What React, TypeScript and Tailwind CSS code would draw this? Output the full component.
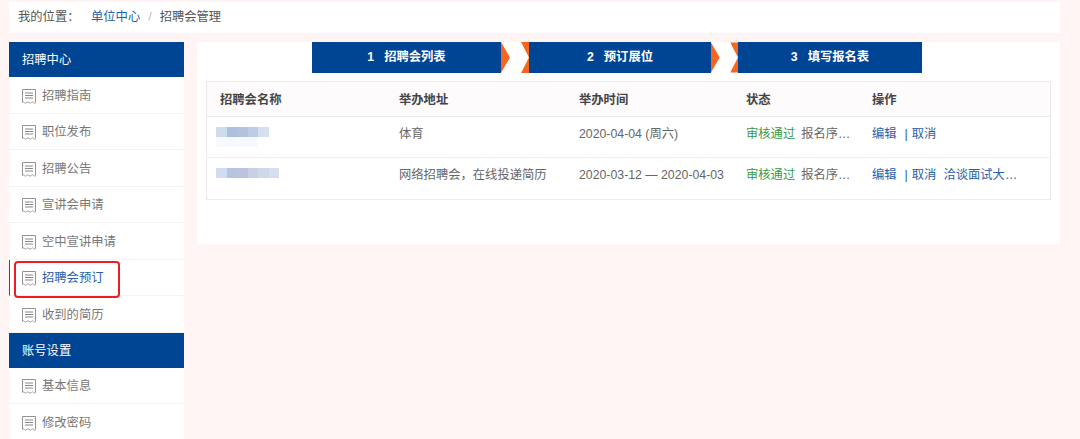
const font = "font-['Liberation_Sans','Noto_Sans_CJK_SC',sans-serif]";

const ReceiptIcon = () => (
  <svg width="16" height="16" viewBox="0 0 16 16" fill="none" stroke="#939393" className="shrink-0">
    <path d="M1.5 14V1.5H14.5V14" />
    <path d="M1 14.5q1.2 -1.4 2.3 0t2.3 0t2.4 0t2.3 0t2.3 0t2.4 0" strokeWidth="0.9" />
    <path d="M4 5H12M4 7.5H12M4 10H12" strokeWidth="1.2" stroke="#888" />
  </svg>
);

const SideHeader = ({ title }: { title: string }) => (
  <div className="h-[35px] bg-[#004494] pl-[13px] pt-[1px] text-white leading-[35px]">{title}</div>
);

const SideItem = ({ title, active }: { title: string; active?: boolean }) => (
  <div
    className={`flex h-[36.5px] items-center gap-[5px] border-b border-[#f5f2f2] bg-white pt-[2px] ${
      active ? "relative border-l border-l-[#33507f] pl-[11px] text-[#2a5ea8]" : "pl-[12px] text-[#777]"
    }`}
  >
    <ReceiptIcon />
    <span>{title}</span>
    {active && (
      <div className="absolute left-[4px] top-[1px] h-[37px] w-[106px] rounded-[4px] border-[2.5px] border-[#ee1c25]" />
    )}
  </div>
);

const Step = ({ n, title, w }: { n: number; title: string; w: string }) => (
  <div className={`${w} flex h-[31px] items-center justify-center gap-[10px] bg-[#004494] font-bold text-white`}>
    <span>{n}</span>
    <span>{title}</span>
  </div>
);

const Chevron = ({ w }: { w: string }) => (
  <svg className={`${w} h-[31px] shrink-0`} viewBox="0 0 28 31">
    <path d="M0 0L9 15.5L0 31Z" fill="#f8651f" />
    <path d="M20 0H28V15.5Z" fill="#f8651f" />
    <path d="M20 31H28V15.5Z" fill="#f8651f" />
  </svg>
);

const Blur = ({ colors }: { colors: string[] }) => (
  <div className="flex h-[10px]">
    {colors.map((c, i) => (
      <div key={i} className="h-full w-[10.5px]" style={{ background: c }} />
    ))}
  </div>
);

const cols = "grid grid-cols-[180px_180px_167px_126px_1fr]";

const Row = ({
  blur,
  faint,
  address,
  time,
  extra,
  last,
}: {
  blur: string[];
  faint?: boolean;
  address: string;
  time: string;
  extra?: boolean;
  last?: boolean;
}) => (
  <div className={`${cols} h-[41px] text-[#666] ${last ? "" : "border-b border-[#f1eeee]"}`}>
    <div className="pl-[9px] pt-[10px]">
      <Blur colors={blur} />
      {faint && <div className="h-[10px] w-[42px] bg-[#f6f9fe]" />}
    </div>
    <div className="pl-[12px] pt-[8px]">{address}</div>
    <div className="pl-[12px] pt-[8px]">{time}</div>
    <div className="pl-[12px] pt-[8px]">
      <span className="text-[#3a9a45]">审核通过</span>
      <span className="ml-[6px]">报名序…</span>
    </div>
    <div className="pl-[12px] pt-[8px] text-[#2a5ea8]">
      <span>编辑</span>
      <span className="ml-[8px]">|</span>
      <span className="ml-[4px]">取消</span>
      <span className="ml-[7px]">{extra ? "洽谈面试大…" : ""}</span>
    </div>
  </div>
);

export default function App() {
  return (
    <div className={`${font} h-[439px] w-[1080px] overflow-hidden bg-[#fff5f5] pl-[9px] pr-[20px] pt-[2px] text-[12.3px]`}>
      <div className="flex h-[31px] items-center bg-white pl-[9px] text-[#555]">
        <span>我的位置：</span>
        <span className="ml-[11.5px] text-[#2a5ea8]">单位中心</span>
        <span className="mx-[8px] text-[#bbb]">/</span>
        <span>招聘会管理</span>
      </div>

      <div className="mt-[9px] flex items-start gap-[13px]">
        <aside className="w-[175px] shrink-0">
          <SideHeader title="招聘中心" />
          <SideItem title="招聘指南" />
          <SideItem title="职位发布" />
          <SideItem title="招聘公告" />
          <SideItem title="宣讲会申请" />
          <SideItem title="空中宣讲申请" />
          <SideItem title="招聘会预订" active />
          <SideItem title="收到的简历" />
          <SideHeader title="账号设置" />
          <SideItem title="基本信息" />
          <SideItem title="修改密码" />
        </aside>

        <main className="h-[202px] flex-1 bg-white">
          <div className="flex pl-[115px]">
            <Step n={1} title="招聘会列表" w="w-[189px]" />
            <Chevron w="w-[28px]" />
            <Step n={2} title="预订展位" w="w-[182px]" />
            <Chevron w="w-[27px]" />
            <Step n={3} title="填写报名表" w="w-[184px]" />
          </div>

          <div className="ml-[9px] mt-[8px] w-[845px] border border-[#eeeaea]">
            <div className={`${cols} h-[35px] items-center border-b border-[#e8e6e8] bg-[#fefbfd] pt-[2px] font-bold text-[#444]`}>
              <div className="pl-[13px]">招聘会名称</div>
              <div className="pl-[12px]">举办地址</div>
              <div className="pl-[12px]">举办时间</div>
              <div className="pl-[12px]">状态</div>
              <div className="pl-[12px]">操作</div>
            </div>
            <Row
              blur={["#cfdcee", "#aebfdb", "#b5c2df", "#c2cbe5", "#d5dfef"]}
              faint
              address="体育"
              time="2020-04-04 (周六)"
            />
            <Row
              blur={["#d0dcef", "#b6c5de", "#bac4df", "#c9cfe5", "#cdd8e9", "#d5dff0"]}
              address="网络招聘会，在线投递简历"
              time="2020-03-12 — 2020-04-03"
              extra
              last
            />
          </div>
        </main>
      </div>
    </div>
  );
}
